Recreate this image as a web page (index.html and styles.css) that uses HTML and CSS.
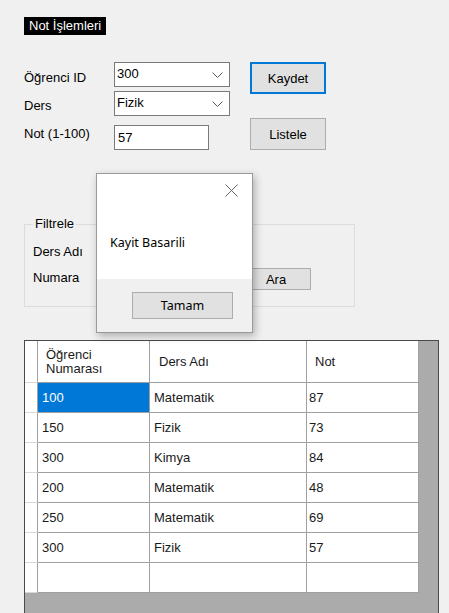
FILE: index.html
```html
<!DOCTYPE html>
<html lang="tr">
<head>
<meta charset="utf-8">
<title>Not İşlemleri</title>
<link rel="stylesheet" href="styles.css">
</head>
<body>
<div class="form">
  <div class="title">Not İşlemleri</div>

  <div class="top">
    <div class="fields">
      <div class="row r1">
        <span class="lbl l1">Öğrenci ID</span>
        <div class="combo"><span>300</span><svg class="chev" width="11" height="6" viewBox="0 0 11 6"><path d="M0.5 0.5 L5.5 5.5 L10.5 0.5" fill="none" stroke="#555" stroke-width="1"/></svg></div>
      </div>
      <div class="row r2">
        <span class="lbl l2">Ders</span>
        <div class="combo"><span>Fizik</span><svg class="chev" width="11" height="6" viewBox="0 0 11 6"><path d="M0.5 0.5 L5.5 5.5 L10.5 0.5" fill="none" stroke="#555" stroke-width="1"/></svg></div>
      </div>
      <div class="row r3">
        <span class="lbl l3">Not (1-100)</span>
        <div class="textbox">57</div>
      </div>
    </div>
    <div class="buttons">
      <div class="btn btn-primary">Kaydet</div>
      <div class="btn btn-list">Listele</div>
    </div>
  </div>

  <fieldset class="group">
    <legend>Filtrele</legend>
    <div class="grow g1"><span class="lbl glbl">Ders Adı</span></div>
    <div class="grow g2"><span class="lbl glbl">Numara</span><div class="btn btn-ara">Ara</div></div>
  </fieldset>

  <div class="grid">
    <div class="cells">
      <div class="c rh hd"></div>
      <div class="c hd h1">Öğrenci<br>Numarası</div>
      <div class="c hd h2">Ders Adı</div>
      <div class="c hd h3">Not</div>

      <div class="c rh"></div><div class="c c1 sel">100</div><div class="c c2">Matematik</div><div class="c c3">87</div>
      <div class="c rh"></div><div class="c c1">150</div><div class="c c2">Fizik</div><div class="c c3">73</div>
      <div class="c rh"></div><div class="c c1">300</div><div class="c c2">Kimya</div><div class="c c3">84</div>
      <div class="c rh"></div><div class="c c1">200</div><div class="c c2">Matematik</div><div class="c c3">48</div>
      <div class="c rh"></div><div class="c c1">250</div><div class="c c2">Matematik</div><div class="c c3">69</div>
      <div class="c rh"></div><div class="c c1">300</div><div class="c c2">Fizik</div><div class="c c3">57</div>
      <div class="c rh"></div><div class="c c1"></div><div class="c c2"></div><div class="c c3"></div>
    </div>
  </div>
</div>

<div class="dialog">
  <div class="dlg-body">
    <svg class="close" width="13" height="13" viewBox="0 0 13 13"><path d="M0.5 0.5 L12.5 12.5 M12.5 0.5 L0.5 12.5" stroke="#666" stroke-width="1" fill="none"/></svg>
    <div class="msg">Kayit Basarili</div>
  </div>
  <div class="dlg-foot">
    <div class="btn btn-ok">Tamam</div>
  </div>
</div>
</body>
</html>
```

FILE: styles.css
```css
html, body {
  margin: 0;
  padding: 0;
  background: #f0f0f0;
  overflow: hidden;
  height: 613px;
}
body {
  font-family: "Liberation Sans", Arial, sans-serif;
  font-size: 13px;
  color: #000;
  position: relative;
}
.form {
  padding-left: 24px;
  padding-top: 17px;
}
.title {
  display: inline-block;
  background: #000;
  color: #fff;
  height: 18px;
  line-height: 18px;
  padding: 0 5px;
  vertical-align: top;
}
.top {
  display: flex;
  align-items: flex-start;
  margin-top: 27px;
}
.fields {
  display: flex;
  flex-direction: column;
}
.row {
  display: flex;
  align-items: flex-start;
}
.r2 { margin-top: 4px; }
.r3 { margin-top: 9px; }
.lbl {
  display: block;
  width: 90px;
  line-height: 16px;
  white-space: nowrap;
}
.l1 { padding-top: 8px; }
.l2 { padding-top: 7px; }
.l3 { padding-top: 1px; }
.combo {
  box-sizing: border-box;
  width: 116px;
  height: 25px;
  border: 1px solid #7a7a7a;
  background: #fff;
  display: flex;
  align-items: center;
  justify-content: space-between;
  padding: 0 6px 0 2px;
}
.combo span { line-height: 16px; margin-top: -2px; }
.chev { display: block; margin-top: 1px; }
.textbox {
  box-sizing: border-box;
  width: 95px;
  height: 25px;
  border: 1px solid #7a7a7a;
  background: #fff;
  padding: 4px 0 0 3px;
  line-height: 16px;
}
.buttons {
  display: flex;
  flex-direction: column;
  margin-left: 20px;
  margin-top: 0;
  gap: 24px;
}
.btn {
  box-sizing: border-box;
  background: #e1e1e1;
  border: 1px solid #adadad;
  display: flex;
  align-items: center;
  justify-content: center;
}
.btn-primary {
  width: 76px;
  height: 32px;
  border: 2px solid #0078d7;
}
.btn-list {
  width: 76px;
  height: 32px;
}
.group {
  box-sizing: border-box;
  width: 331px;
  margin: 66px 0 0 0;
  padding: 8px 8px 14px 8px;
  border: 1px solid #dcdcdc;
  min-width: 0;
}
.group legend {
  padding: 0 2px;
  line-height: 16px;
}
.grow {
  display: flex;
  align-items: flex-start;
  height: 26px;
}
.glbl { width: 208px; padding-top: 4px; }
.btn-ara {
  width: 70px;
  height: 22px;
  margin-top: 2px;
}
.grid {
  box-sizing: border-box;
  width: 415px;
  height: 300px;
  margin-top: 33px;
  border: 1px solid #4a4a4a;
  background: #ababab;
}
.cells {
  display: grid;
  grid-template-columns: 13px 112px 157px 112px;
  grid-template-rows: 42px;
  grid-auto-rows: 30px;
  width: 394px;
  background: #fff;
}
.c {
  box-sizing: border-box;
  border-right: 1px solid #a0a0a0;
  border-bottom: 1px solid #a0a0a0;
  display: flex;
  align-items: center;
  line-height: 15px;
  white-space: nowrap;
  color: #1a1a1a;
}
.rh { border-bottom-color: #d8d8d8; }
.hd { line-height: 14px; }
.h1 { padding-left: 8px; }
.h2 { padding-left: 9px; }
.h3 { padding-left: 8px; }
.c1 { padding-left: 4px; }
.c2 { padding-left: 4px; }
.c3 { padding-left: 2px; }
.sel {
  background: #0078d7;
  color: #fff;
}
.dialog {
  position: absolute;
  left: 96px;
  top: 173px;
  width: 157px;
  height: 160px;
  box-sizing: border-box;
  border: 1px solid #9a9a9a;
  box-shadow: 2px 3px 8px rgba(0, 0, 0, 0.28);
  background: #f0f0f0;
  display: flex;
  flex-direction: column;
  font-family: "Noto Sans", "Liberation Sans", sans-serif;
  font-size: 12.5px;
}
.dlg-body {
  background: #fff;
  height: 105px;
  position: relative;
  display: flex;
  flex-direction: column;
}
.close {
  position: absolute;
  left: 128px;
  top: 10px;
}
.msg {
  margin-top: 61px;
  margin-left: 13px;
  line-height: 16px;
}
.dlg-foot {
  padding: 13px 0 0 35px;
}
.btn-ok {
  width: 101px;
  height: 27px;
  background: #e1e1e1;
  border: 1px solid #adadad;
}
```
